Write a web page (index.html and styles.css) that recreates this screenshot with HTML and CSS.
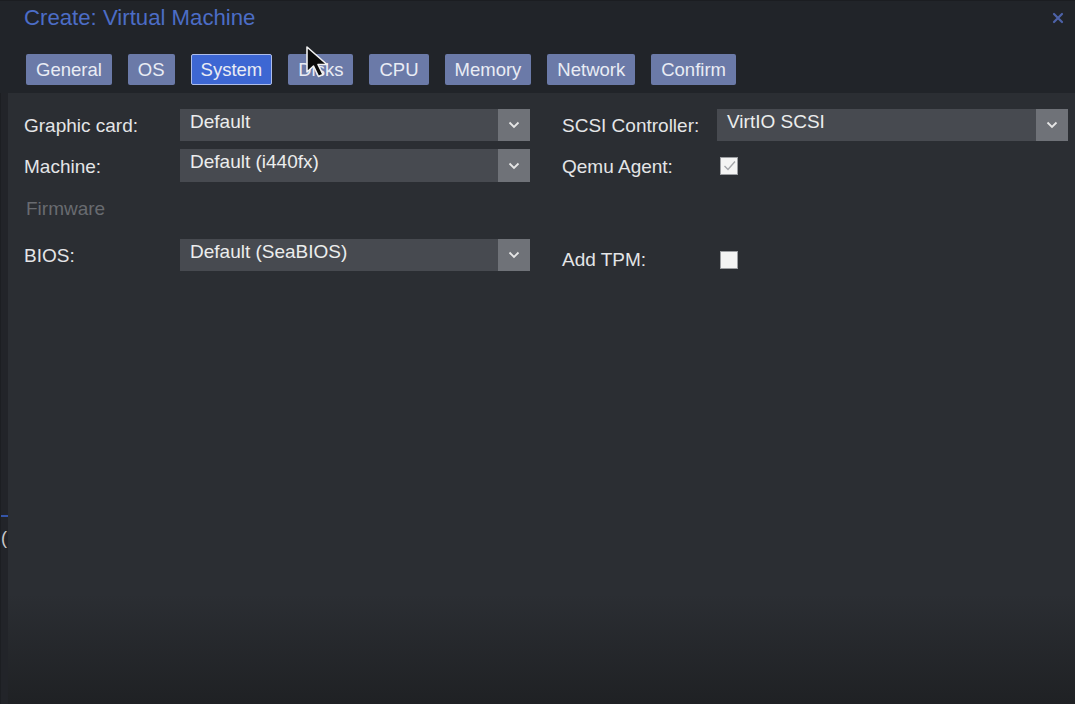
FILE: index.html
```html
<!DOCTYPE html>
<html lang="en">

<head>
    <meta charset="UTF-8">
    <meta name="viewport" content="width=device-width, initial-scale=1.0">
    <title>Create: Virtual Machine</title>
    <link rel="stylesheet" href="styles.css">
</head>

<body>
    <div class="window">
        <header class="win-header">
            <div class="title-bar">
                <span class="title">Create: Virtual Machine</span>
                <button class="close-btn" aria-label="Close">
                    <svg width="12" height="12" viewBox="0 0 12 12">
                        <path d="M2 2 L10 10 M10 2 L2 10" stroke="#4d62a8" stroke-width="2.2" stroke-linecap="round"/>
                    </svg>
                </button>
            </div>
            <nav class="tabs">
                <span class="tab">General</span>
                <span class="tab">OS</span>
                <span class="tab active">System</span>
                <span class="tab">Disks</span>
                <span class="tab">CPU</span>
                <span class="tab">Memory</span>
                <span class="tab">Network</span>
                <span class="tab">Confirm</span>
            </nav>
        </header>

        <div class="win-body">
            <div class="backdrop">
                <span class="backdrop-line"></span>
                <span class="backdrop-char">(</span>
            </div>

            <div class="panel">
                <div class="form">
                    <!-- row 1 -->
                    <label class="field-label">Graphic card:</label>
                    <div class="combo">
                        <span class="combo-value">Default</span>
                        <span class="combo-trigger">
                            <svg width="12" height="8" viewBox="0 0 12 8"><path d="M1.5 1.5 L6 6 L10.5 1.5" fill="none" stroke="#e6e6e6" stroke-width="1.8"/></svg>
                        </span>
                    </div>
                    <label class="field-label right">SCSI Controller:</label>
                    <div class="combo right wide">
                        <span class="combo-value">VirtIO SCSI</span>
                        <span class="combo-trigger">
                            <svg width="12" height="8" viewBox="0 0 12 8"><path d="M1.5 1.5 L6 6 L10.5 1.5" fill="none" stroke="#e6e6e6" stroke-width="1.8"/></svg>
                        </span>
                    </div>

                    <!-- row 2 -->
                    <label class="field-label">Machine:</label>
                    <div class="combo">
                        <span class="combo-value">Default (i440fx)</span>
                        <span class="combo-trigger">
                            <svg width="12" height="8" viewBox="0 0 12 8"><path d="M1.5 1.5 L6 6 L10.5 1.5" fill="none" stroke="#e6e6e6" stroke-width="1.8"/></svg>
                        </span>
                    </div>
                    <label class="field-label right">Qemu Agent:</label>
                    <div class="check-cell right">
                        <span class="checkbox">
                            <svg width="15" height="15" viewBox="0 0 15 15"><path d="M2.5 8 L6 11.5 L13 3.5" fill="none" stroke="#a4a6aa" stroke-width="1.4"/></svg>
                        </span>
                    </div>

                    <!-- row 3 -->
                    <div class="fieldset-title">Firmware</div>

                    <!-- row 4 -->
                    <label class="field-label">BIOS:</label>
                    <div class="combo">
                        <span class="combo-value">Default (SeaBIOS)</span>
                        <span class="combo-trigger">
                            <svg width="12" height="8" viewBox="0 0 12 8"><path d="M1.5 1.5 L6 6 L10.5 1.5" fill="none" stroke="#e6e6e6" stroke-width="1.8"/></svg>
                        </span>
                    </div>
                    <label class="field-label right shifted">Add TPM:</label>
                    <div class="check-cell right shifted">
                        <span class="checkbox"></span>
                    </div>
                </div>
            </div>
        </div>

        <svg class="cursor" width="28" height="34" viewBox="0 0 28 34">
            <path d="M2 2 L2 27 L8.5 21 L13.5 31.5 L18 29.5 L13 19.5 L22 19.5 Z" fill="#0b0b0b" stroke="#f2f2f2" stroke-width="1.6" stroke-linejoin="round"/>
        </svg>
    </div>
</body>
</html>
```

FILE: styles.css
```css
:root {
    --header-bg: #212429;
    --body-bg: #2b2e33;
    --strip-bg: #222429;
    --title-color: #4c6dc6;
    --tab-bg: #6b7aa8;
    --tab-active: #3d67d3;
    --field-bg: #474a50;
    --trigger-bg: #6f7278;
    --label-color: #e4e5e7;
    --muted: #686b70;
}

* {
    margin: 0;
    padding: 0;
    box-sizing: border-box;
}

html, body {
    height: 100%;
}

body {
    font-family: 'Liberation Sans', Arial, sans-serif;
    background-color: var(--body-bg);
    color: var(--label-color);
    overflow: hidden;
}

.window {
    position: relative;
    display: flex;
    flex-direction: column;
    height: 100%;
}

.win-header {
    background-color: var(--header-bg);
    border-top: 1px solid #1b1d21;
    height: 93px;
    flex-shrink: 0;
}

.title-bar {
    display: flex;
    justify-content: space-between;
    align-items: center;
    padding: 4px 9px 0 24px;
    height: 30px;
}

.title {
    color: var(--title-color);
    font-size: 22.2px;
}

.close-btn {
    background: none;
    border: none;
    display: flex;
    padding: 2px;
}

.tabs {
    display: flex;
    gap: 16px;
    padding: 23px 0 0 26px;
}

.tab {
    background-color: var(--tab-bg);
    color: #e9ecf4;
    font-size: 18.5px;
    height: 31px;
    line-height: 29px;
    padding: 0 9px;
    border-radius: 2px;
    border: 1px solid transparent;
}

.tab.active {
    background-color: var(--tab-active);
    border-color: #aebde9;
}

.win-body {
    flex: 1;
    display: flex;
}

.backdrop {
    position: relative;
    width: 8px;
    flex-shrink: 0;
    background-color: var(--strip-bg);
    border-left: 1px solid #1c1e22;
}

.backdrop-line {
    position: absolute;
    left: 0;
    right: 0;
    top: 422px;
    height: 2px;
    background-color: #3555a8;
}

.backdrop-char {
    position: absolute;
    left: 0;
    top: 435px;
    font-size: 18px;
    color: #c8c9cc;
}

.panel {
    flex: 1;
    background: linear-gradient(to bottom, var(--body-bg) 0, var(--body-bg) calc(100% - 110px), #1f2124 100%);
    padding: 16px 7px 0 16px;
}

.form {
    display: grid;
    grid-template-columns: 156px 350px 32px 155px 351px;
    grid-template-rows: 32px 33px 41px 32px;
    row-gap: 8px;
}

.field-label {
    grid-column: 1;
    display: flex;
    align-items: center;
    padding-top: 2px;
    font-size: 19px;
    color: var(--label-color);
}

.field-label.right {
    grid-column: 4;
}

.combo {
    grid-column: 2;
    display: flex;
    background-color: var(--field-bg);
    height: 100%;
}

.combo.right {
    grid-column: 5;
}

.combo-value {
    flex: 1;
    padding-left: 10px;
    line-height: 26px;
    font-size: 19px;
    color: #eceded;
}

.combo-trigger {
    width: 32px;
    background-color: var(--trigger-bg);
    display: flex;
    align-items: center;
    justify-content: center;
}

.check-cell {
    grid-column: 5;
    display: flex;
    align-items: center;
    padding-left: 3px;
}

.checkbox {
    width: 18px;
    height: 18px;
    background-color: #f4f4f4;
    border: 1px solid #9c9ea2;
    display: flex;
    align-items: center;
    justify-content: center;
}

.fieldset-title {
    grid-column: 1 / 3;
    padding-left: 2px;
    padding-top: 8px;
    font-size: 19px;
    color: var(--muted);
}

.field-label.shifted,
.check-cell.shifted {
    padding-top: 10px;
}

.cursor {
    position: absolute;
    left: 305px;
    top: 45px;
}
```
